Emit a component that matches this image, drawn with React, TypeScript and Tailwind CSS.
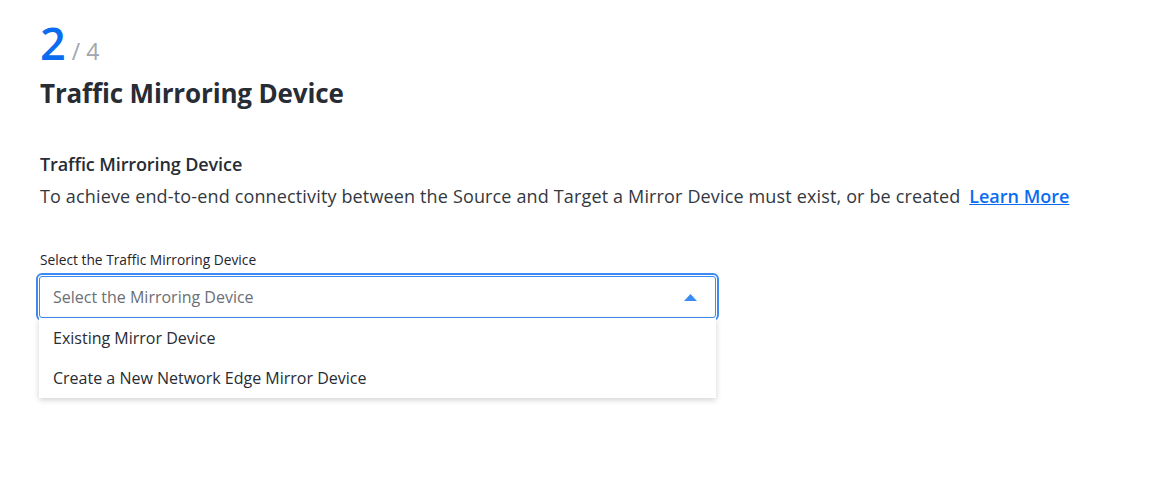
import React from "react";

export default function App() {
  return (
    <div className="min-h-screen bg-white pl-10 pt-[18px] text-[#272c35]" style={{ fontFamily: '"Open Sans", "Liberation Sans", sans-serif' }}>
      <div className="flex items-baseline gap-[6px] leading-none h-[46px]">
        <span className="text-[45px] font-semibold text-[#0a6cf0] leading-none mt-[2px]">2</span>
        <span className="text-[23px] text-[#a2a6ad]">/ 4</span>
      </div>
      <h1 className="mt-[12px] text-[26px] font-bold leading-[34px] tracking-[-0.15px] text-[#272c35]">Traffic Mirroring Device</h1>
      <h2 className="mt-[42px] text-[18px] font-semibold leading-[24px] tracking-[-0.1px]">Traffic Mirroring Device</h2>
      <p className="mt-[8px] text-[18px] leading-[24px] tracking-[0.15px] text-[#33383f]">
        To achieve end-to-end connectivity between the Source and Target a Mirror Device must exist, or be created{" "}
        <a className="ml-1 font-semibold text-[#0a6cf0] underline tracking-normal">Learn More</a>
      </p>
      <div className="mt-[43px] w-[676px]">
        <label className="block text-[13.75px] leading-[18px] font-medium text-[#1f242c]">Select the Traffic Mirroring Device</label>
        <div className="relative mt-[7px] ml-[-1px]">
          <div className="flex h-[42px] items-center justify-between rounded-[3px] border border-[#3d8bf2] bg-white pl-[13px] pr-[18px] outline outline-2 outline-offset-1 outline-[#3d8bf2]">
            <span className="text-[16px] text-[#6b6f76]">Select the Mirroring Device</span>
            <svg width="13" height="7" viewBox="0 0 13 7"><path d="M0 7 L6.5 0 L13 7 Z" fill="#3a8cf2" /></svg>
          </div>
          <div className="absolute left-0 right-0 top-[42px] bg-white shadow-[0_2px_6px_rgba(0,0,0,0.18)]">
            <div className="flex h-[40px] items-center pl-[14px] text-[16px] font-medium text-[#272c35]">Existing Mirror Device</div>
            <div className="flex h-[40px] items-center pl-[14px] text-[16px] font-medium text-[#272c35]">Create a New Network Edge Mirror Device</div>
          </div>
        </div>
      </div>
    </div>
  );
}
